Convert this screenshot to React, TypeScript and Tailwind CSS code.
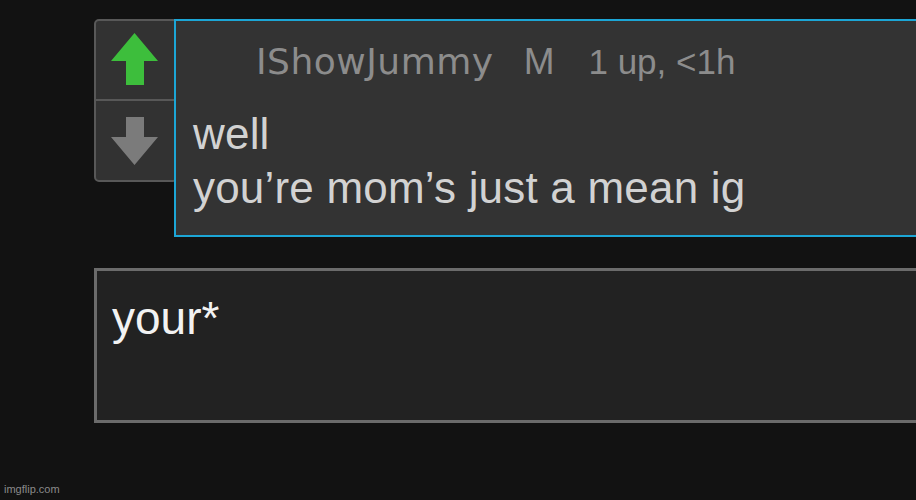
import React from 'react'

function UpArrow() {
    return (
        <svg width="48" height="52" viewBox="0 0 48 52">
            <polygon
                points="23.5,0 47,28 33,28 33,52 15,52 15,28 0,28"
                fill="#3dbe3c"
            />
        </svg>
    )
}

function DownArrow() {
    return (
        <svg width="48" height="48" viewBox="0 0 48 48">
            <polygon
                points="15,0 33,0 33,20 47,20 23.5,48 0,20 15,20"
                fill="#7b7b7b"
            />
        </svg>
    )
}

export default function App() {
    return (
        <div className="relative w-[916px] h-[500px] overflow-hidden bg-[#121212] font-['Liberation_Sans',Arial,sans-serif]">
            <div className="flex flex-col pl-[94px] pt-[19px]">
                <div className="flex items-start">
                    {/* vote box */}
                    <div className="flex flex-col w-[84px] h-[163px] shrink-0 bg-[#323232] border-2 border-[#585858] rounded-[5px]">
                        <div className="flex h-[80px] justify-center items-start pt-[12px] pr-[2px] border-b-2 border-[#585858]">
                            <UpArrow />
                        </div>
                        <div className="flex flex-1 justify-center items-start pt-[16px] pr-[2px]">
                            <DownArrow />
                        </div>
                    </div>

                    {/* comment */}
                    <div className="-ml-[4px] w-[760px] shrink-0 h-[218px] bg-[#333333] border-2 border-[#1ca6d6]">
                        <div className="flex items-baseline pl-[80px] pt-[23px] leading-[36px] text-[#8c8c8c]">
                            <span className="font-['DejaVu_Sans',sans-serif] text-[36px] tracking-[0.5px]">
                                IShowJummy
                            </span>
                            <span className="ml-[30px] text-[37px]">M</span>
                            <span className="ml-[34px] text-[35px]">1 up, &lt;1h</span>
                        </div>
                        <div className="pl-[17px] pt-[27px] text-[44px] tracking-[0.2px] leading-[54px] text-[#d2d2d2]">
                            <div>well</div>
                            <div>you’re mom’s just a mean ig</div>
                        </div>
                    </div>
                </div>

                {/* reply input */}
                <div className="mt-[31px] w-[840px] h-[155px] bg-[#222222] border-[3px] border-[#6b6b6b] pl-[15px] pt-[24px]">
                    <div className="text-[46px] leading-[46px] text-[#f2f2f2]">your*</div>
                </div>
            </div>

            <div className="absolute left-[4px] bottom-[3px] text-[11px] text-[#8a8a8a]">
                imgflip.com
            </div>
        </div>
    )
}
